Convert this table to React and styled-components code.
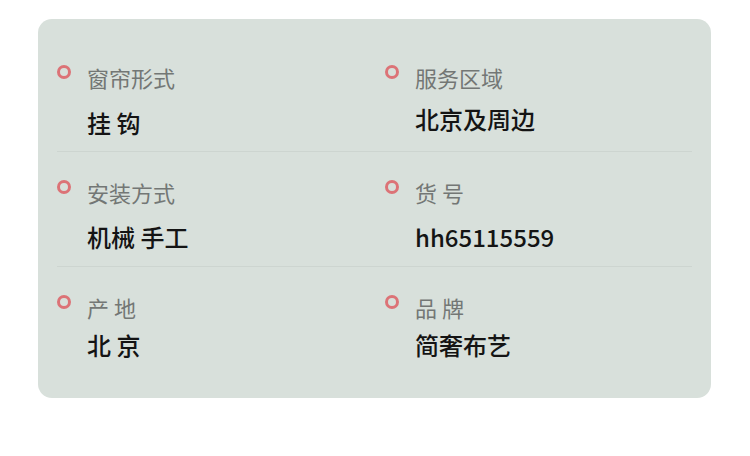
import React from "react";
import styled, { createGlobalStyle } from "styled-components";

const items = [
  [
    { label: "窗帘形式", value: "挂 钩", gap: 21 },
    { label: "服务区域", value: "北京及周边", gap: 17 },
  ],
  [
    { label: "安装方式", value: "机械 手工", gap: 20 },
    { label: "货 号", value: "hh65115559", gap: 20 },
  ],
  [
    { label: "产 地", value: "北 京", gap: 13 },
    { label: "品 牌", value: "简奢布艺", gap: 13 },
  ],
];

const App = () => {
  return (
    <>
      <GlobalStyle />
      <Card>
        {items.map((row, i) => (
          <Row key={i} last={i === items.length - 1}>
            {row.map((item) => (
              <Cell key={item.label}>
                <Ring />
                <Texts>
                  <Label>{item.label}</Label>
                  <Value $gap={item.gap}>{item.value}</Value>
                </Texts>
              </Cell>
            ))}
          </Row>
        ))}
      </Card>
    </>
  );
};
export default App;

const GlobalStyle = createGlobalStyle`
  body {
    margin: 0;
    background: #ffffff;
    font-family: "Noto Sans CJK SC", "Noto Sans", sans-serif;
  }
`;

const Card = styled.div`
  margin: 19px 0 0 38px;
  width: 673px;
  height: 379px;
  box-sizing: border-box;
  padding: 18px 19px 0 19px;
  background: #d8e0db;
  border-radius: 14px;
`;

const Row = styled.div`
  display: grid;
  grid-template-columns: 328px 1fr;
  height: ${(p) => (p.last ? "auto" : "115px")};
  box-sizing: border-box;
  padding-top: 28px;
  border-bottom: ${(p) => (p.last ? "none" : "1px solid #cdd5d0")};
`;

const Cell = styled.div`
  display: flex;
  align-items: flex-start;
`;

const Ring = styled.span`
  flex: none;
  width: 8px;
  height: 8px;
  margin-top: 0px;
  border: 3px solid #dc7377;
  border-radius: 50%;
`;

const Texts = styled.div`
  display: flex;
  flex-direction: column;
  margin-left: 16px;
`;

const Label = styled.div`
  font-size: 22px;
  line-height: 24px;
  color: #737775;
`;

const Value = styled.div`
  margin-top: ${(p) => p.$gap}px;
  font-size: 24px;
  line-height: 26px;
  font-weight: 500;
  color: #141414;
`;
